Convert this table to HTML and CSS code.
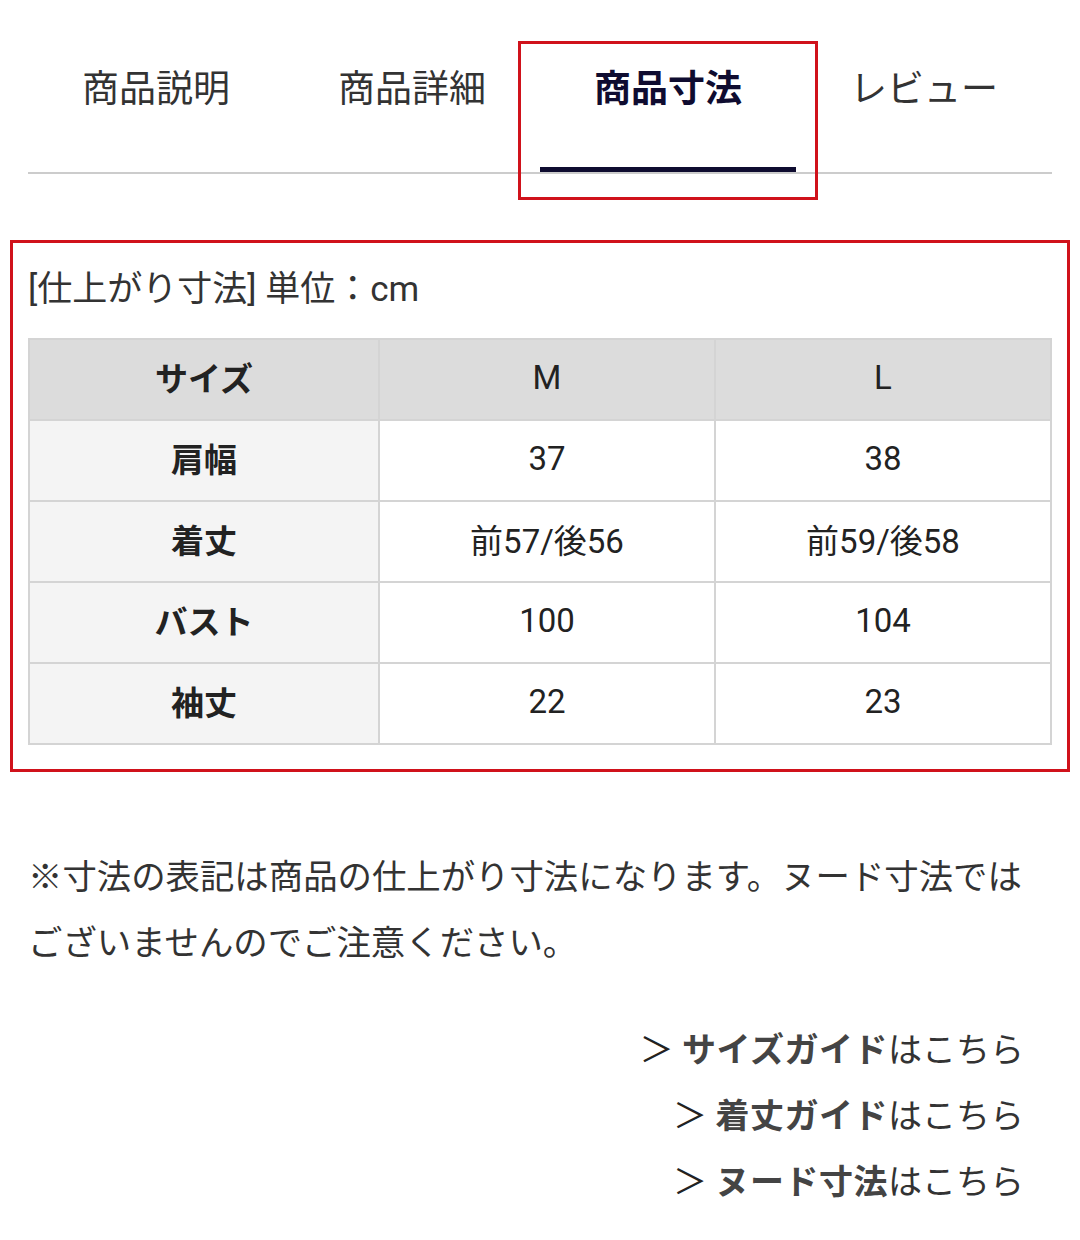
FILE: index.html
```html
<!DOCTYPE html>
<html lang="ja">
<head>
<meta charset="utf-8">
<title>商品寸法</title>
<link rel="stylesheet" href="styles.css">
</head>
<body>
<div class="page">
  <nav class="tabs">
    <div class="tab">商品説明</div>
    <div class="tab">商品詳細</div>
    <div class="tab tab-active">商品寸法</div>
    <div class="tab">レビュー</div>
  </nav>

  <section class="size-section">
    <p class="caption">[仕上がり寸法] 単位：cm</p>
    <table class="size-table">
      <colgroup>
        <col class="col-label">
        <col class="col-val">
        <col class="col-val">
      </colgroup>
      <thead>
        <tr><th class="head-label">サイズ</th><th>M</th><th>L</th></tr>
      </thead>
      <tbody>
        <tr><th>肩幅</th><td>37</td><td>38</td></tr>
        <tr><th>着丈</th><td>前57/後56</td><td>前59/後58</td></tr>
        <tr><th>バスト</th><td>100</td><td>104</td></tr>
        <tr><th>袖丈</th><td>22</td><td>23</td></tr>
      </tbody>
    </table>
  </section>

  <p class="note">※寸法の表記は商品の仕上がり寸法になります。ヌード寸法ではございませんのでご注意ください。</p>

  <ul class="links">
    <li><span class="arrow">＞</span> <b>サイズガイド</b>はこちら</li>
    <li><span class="arrow">＞</span> <b>着丈ガイド</b>はこちら</li>
    <li><span class="arrow">＞</span> <b>ヌード寸法</b>はこちら</li>
  </ul>
</div>
</body>
</html>
```

FILE: styles.css
```css
html, body {
  margin: 0;
  padding: 0;
  background: #ffffff;
}

body {
  font-family: Roboto, "Noto Sans CJK JP", "Noto Sans", sans-serif;
  color: #333333;
}

.page {
  width: 1024px;
  margin: 0 28px;
}

/* Tabs */
.tabs {
  display: grid;
  grid-template-columns: repeat(4, 1fr);
  border-bottom: 2px solid #cccccc;
}

.tab {
  position: relative;
  text-align: center;
  font-size: 37px;
  line-height: 37px;
  padding: 71px 0 64px;
  color: #333333;
}

.tab-active {
  font-weight: 700;
  color: #0f0c30;
}

.tab-active::before {
  content: "";
  position: absolute;
  left: 0;
  right: 0;
  bottom: 0;
  height: 5px;
  background: #0f0c30;
}

.tab-active::after {
  content: "";
  position: absolute;
  left: -22px;
  right: -22px;
  top: 41px;
  bottom: -28px;
  border: 3px solid #d0121b;
}

/* Size section */
.size-section {
  position: relative;
  margin-top: 84px;
  padding-bottom: 9px;
}

.size-section::after {
  content: "";
  position: absolute;
  left: -18px;
  right: -18px;
  top: -18px;
  bottom: -18px;
  border: 3px solid #d0121b;
  pointer-events: none;
}

.caption {
  margin: 0;
  padding-top: 12px;
  font-size: 35px;
  line-height: 40px;
  color: #333333;
}

.size-table {
  margin-top: 28px;
  width: 1024px;
  border-collapse: collapse;
  table-layout: fixed;
  font-size: 33px;
}

.col-label {
  width: 350px;
}

.size-table th,
.size-table td {
  border: 2px solid #d4d4d4;
  height: 74px;
  padding: 0 0 5px;
  text-align: center;
  vertical-align: middle;
  color: #222222;
}

.size-table thead th {
  background: #dcdcdc;
  font-weight: 400;
}

.size-table thead th.head-label {
  font-weight: 700;
}

.size-table tbody th {
  background: #f4f4f4;
  font-weight: 700;
}

.size-table td {
  background: #ffffff;
}

/* Note */
.note {
  margin: 90px 0 0;
  padding-right: 30px;
  font-size: 34.4px;
  line-height: 66px;
  color: #333333;
}

/* Links */
.links {
  list-style: none;
  margin: 41px 0 0;
  padding: 0 28px 0 0;
  text-align: right;
  font-size: 34px;
  line-height: 66px;
  color: #333333;
}

.links .arrow {
  font-family: "Noto Sans CJK JP", sans-serif;
  font-weight: 400;
  line-height: 1;
  color: #222222;
}

.links b {
  font-weight: 700;
  color: #444444;
  letter-spacing: 0.5px;
}
```
